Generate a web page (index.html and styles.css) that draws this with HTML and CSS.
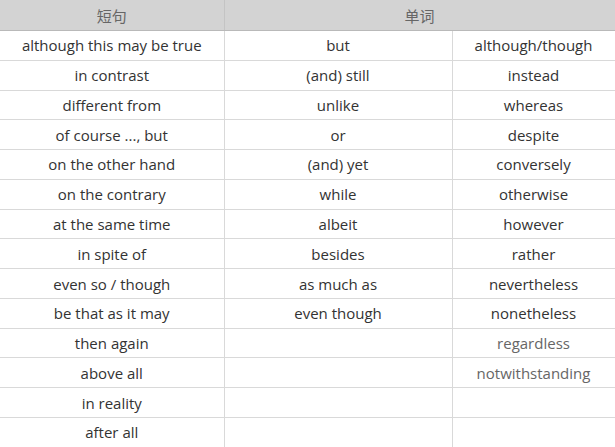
FILE: index.html
```html
<!DOCTYPE html>
<html>
<head>
<meta charset="utf-8">
<link rel="stylesheet" href="styles.css">
</head>
<body>
<table class="words">
  <colgroup>
    <col class="c1">
    <col class="c2">
    <col class="c3">
  </colgroup>
  <thead>
    <tr><th>短句</th><th colspan="2">单词</th></tr>
  </thead>
  <tbody>
    <tr><td>although this may be true</td><td>but</td><td>although/though</td></tr>
    <tr><td>in contrast</td><td>(and) still</td><td>instead</td></tr>
    <tr><td>different from</td><td>unlike</td><td>whereas</td></tr>
    <tr><td>of course ..., but</td><td>or</td><td>despite</td></tr>
    <tr><td>on the other hand</td><td>(and) yet</td><td>conversely</td></tr>
    <tr><td>on the contrary</td><td>while</td><td>otherwise</td></tr>
    <tr><td>at the same time</td><td>albeit</td><td>however</td></tr>
    <tr><td>in spite of</td><td>besides</td><td>rather</td></tr>
    <tr><td>even so / though</td><td>as much as</td><td>nevertheless</td></tr>
    <tr><td>be that as it may</td><td>even though</td><td>nonetheless</td></tr>
    <tr><td>then again</td><td></td><td class="muted">regardless</td></tr>
    <tr><td>above all</td><td></td><td class="muted">notwithstanding</td></tr>
    <tr><td>in reality</td><td></td><td></td></tr>
    <tr><td>after all</td><td></td><td></td></tr>
  </tbody>
</table>
</body>
</html>
```
FILE: styles.css
```css
html, body {
  margin: 0;
  padding: 0;
  background: #ffffff;
}
.words {
  border-collapse: collapse;
  table-layout: fixed;
  width: 615px;
  font-family: "Open Sans", "Noto Sans CJK SC", sans-serif;
  font-size: 15px;
  color: #333333;
}
.c1 { width: 224px; }
.c2 { width: 228px; }
.c3 { width: 163px; }
.words th {
  background: #d3d3d3;
  color: #666666;
  font-weight: normal;
  height: 30px;
  padding: 0;
  text-align: center;
  border-bottom: 1px solid #b9b9b9;
  border-right: 1px solid #c4c4c4;
}
.words td {
  height: 28.77px;
  padding: 0;
  text-align: center;
  border-right: 1px solid #d9d9d9;
  border-bottom: 1px solid #d9d9d9;
}
.words td.muted { color: #666666; }
```
